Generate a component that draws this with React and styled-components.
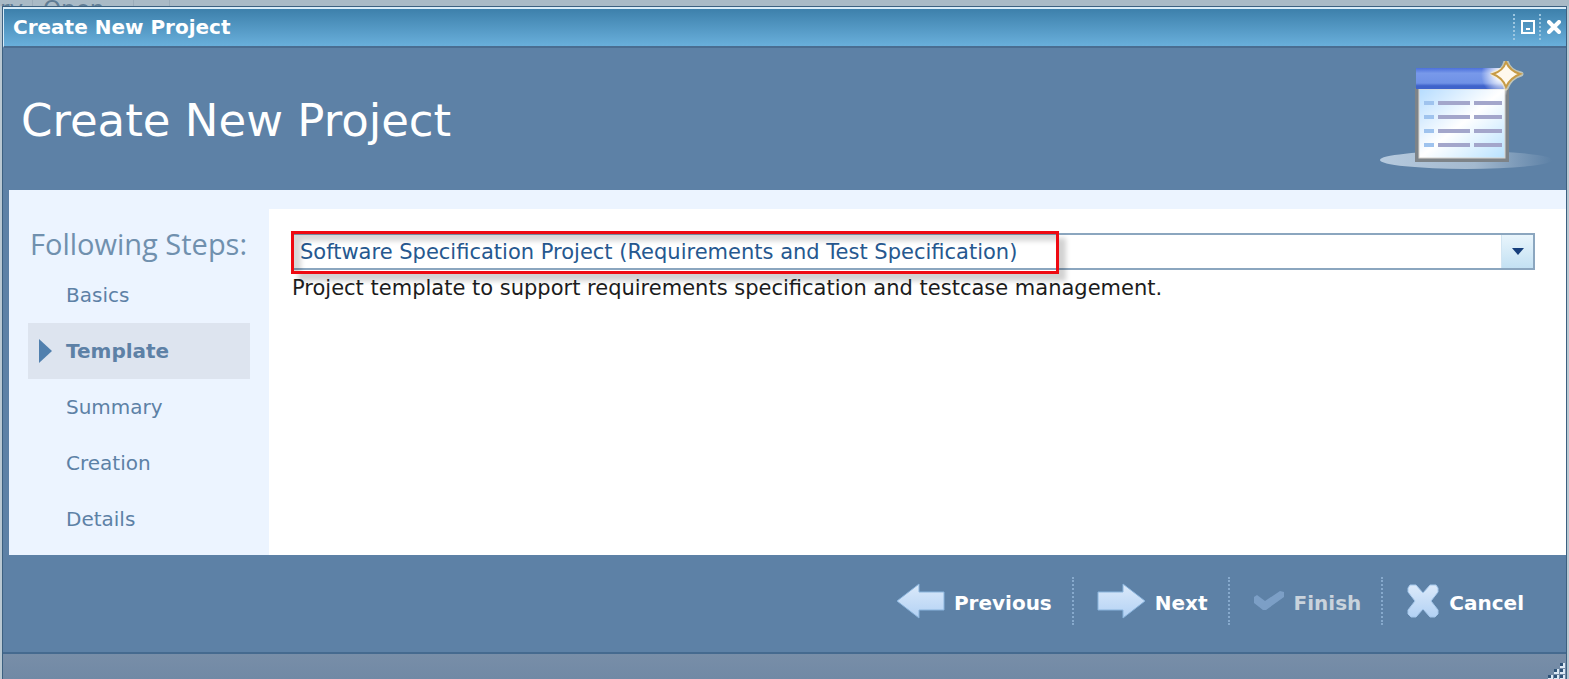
import React from "react";
import styled, { createGlobalStyle, css } from "styled-components";

const Global = createGlobalStyle`
  *, *::before, *::after { box-sizing: border-box; }
  html, body { margin: 0; }
  body {
    background: #b9c8d2;
    font-family: "DejaVu Sans", Verdana, sans-serif;
    font-size: 20px;
    line-height: 24px;
    color: #1c1c1c;
  }
`;

const Page = styled.div`
  min-height: 100vh;
  display: flex;
  flex-direction: column;
  overflow: hidden;
`;

const Backdrop = styled.div`
  height: 6px;
  overflow: hidden;
  display: flex;
  align-items: flex-start;
  background: #a9bac6;
  color: #5f7c94;
  font-size: 23px;
  line-height: 18px;
`;

const BackdropCell = styled.span`
  flex: none;
  width: ${(p) => p.$width}px;
  padding-left: ${(p) => p.$indent || 0}px;
  height: 18px;
  border-right: 1px solid #9aacba;
  white-space: nowrap;
`;

const Dialog = styled.section`
  flex: 1;
  display: flex;
  flex-direction: column;
  margin: 0 2px;
  border: 1px solid #3c6080;
  border-width: 1px 1px 0 1px;
  background: #5d81a6;
`;

const TitleBar = styled.header`
  display: flex;
  align-items: center;
  justify-content: space-between;
  height: 41px;
  padding: 0 1px 1px 9px;
  border-top: 2px solid #d8ecf8;
  border-left: 1px solid #d8ecf8;
  border-bottom: 2px solid #4a6d91;
  background: linear-gradient(#3d80ab, #69afdb);
  color: #fff;
  font-weight: bold;
`;

const TitleTools = styled.div`
  display: flex;
  align-items: center;
`;

const ToolButton = styled.button`
  display: flex;
  align-items: center;
  justify-content: center;
  width: 26px;
  height: 26px;
  padding: 0 0 0 2px;
  border: 0;
  border-left: 2px dotted #9cc6e0;
  background: none;
  color: #fff;
`;

const Banner = styled.div`
  display: flex;
  align-items: center;
  justify-content: space-between;
  height: 142px;
  padding: 0 12px 0 18px;
`;

const Heading = styled.h1`
  margin: 0;
  padding-top: 4px;
  font-size: 45px;
  line-height: 56px;
  font-weight: normal;
  color: #fff;
`;

const Body = styled.div`
  flex: 1;
  display: flex;
  margin-left: 6px;
  padding-top: 19px;
  background: #ecf4ff;
`;

const Sidebar = styled.nav`
  flex: none;
  width: 260px;
  padding: 16px 19px 8px;
`;

const SidebarTitle = styled.h2`
  margin: 0 0 4px 2px;
  font-family: "Open Sans", "Noto Sans", sans-serif;
  font-size: 29px;
  line-height: 38px;
  font-weight: normal;
  color: #7090ae;
  white-space: nowrap;
`;

const Steps = styled.ol`
  margin: 0;
  padding: 0;
  list-style: none;
`;

const Step = styled.li`
  display: flex;
  align-items: center;
  height: 56px;
  padding-left: 11px;
  color: #5d81a6;
  ${(p) =>
    p.$current &&
    css`
      background: #dde4ef;
      font-weight: bold;
    `}
`;

const Marker = styled.span`
  flex: none;
  display: flex;
  width: 27px;
`;

const Content = styled.main`
  flex: 1;
  min-width: 0;
  padding: 24px 31px 24px 23px;
  background: #fff;
  font-size: 21px;
`;

const SelectField = styled.div`
  position: relative;
  display: flex;
  height: 37px;
`;

const TemplateSelect = styled.select`
  appearance: none;
  flex: 1;
  min-width: 0;
  padding: 0 40px 0 6px;
  border: 2px solid #8ba6bf;
  border-radius: 0;
  background: #fff;
  color: #26588f;
  font: inherit;
`;

const SelectArrow = styled.span`
  position: absolute;
  top: 2px;
  right: 2px;
  bottom: 2px;
  width: 32px;
  display: flex;
  align-items: center;
  justify-content: center;
  background: linear-gradient(#e9f5fc, #c3e1f3);
  border-left: 1px solid #d2e5f2;
  pointer-events: none;
`;

const Highlight = styled.span`
  position: absolute;
  top: -2px;
  left: -1px;
  width: 768px;
  max-width: 100%;
  height: 43px;
  border: 3px solid #ee0a12;
  box-shadow: 7px 7px 5px rgba(0, 0, 0, 0.18), inset 7px 7px 5px rgba(0, 0, 0, 0.16);
  pointer-events: none;
`;

const Description = styled.p`
  position: relative;
  margin: 6px 0 0;
`;

const Footer = styled.footer`
  display: flex;
  justify-content: flex-end;
  align-items: center;
  height: 97px;
  padding: 0 22px 6px 0;
`;

const FooterButton = styled.button`
  display: flex;
  align-items: center;
  gap: 9px;
  height: 48px;
  padding: 0 20px 0 23px;
  border: 0;
  border-right: ${(p) => (p.$last ? "0" : "2px dotted #86a9cc")};
  background: none;
  color: #fff;
  font: inherit;
  font-weight: bold;
  &:disabled { color: #c9d3dc; }
`;

const ButtonLabel = styled.span`
  padding-top: 4px;
`;

const StatusBar = styled.div`
  display: flex;
  justify-content: flex-end;
  align-items: flex-end;
  height: 27px;
  border-top: 2px solid #456a8f;
  background: linear-gradient(#788ea8, #7189a5);
`;

const PageIcon = () => (
  <svg width="176" height="116" viewBox="0 6 176 116" aria-hidden="true">
    <defs>
      <linearGradient id="shadow" x1="0" x2="1">
        <stop offset="0" stopColor="#b6cade" />
        <stop offset="0.55" stopColor="#a3b9cf" />
        <stop offset="1" stopColor="#5d81a6" />
      </linearGradient>
      <linearGradient id="sheet" x1="0" y1="0" x2="1" y2="1">
        <stop offset="0" stopColor="#b5dcff" />
        <stop offset="0.5" stopColor="#ffffff" />
        <stop offset="1" stopColor="#b8e2ff" />
      </linearGradient>
      <linearGradient id="bar" x1="0" y1="0" x2="0" y2="1">
        <stop offset="0" stopColor="#4b70db" />
        <stop offset="0.25" stopColor="#7899ea" />
        <stop offset="0.72" stopColor="#6f91e6" />
        <stop offset="0.85" stopColor="#3f63cb" />
      </linearGradient>
      <radialGradient id="glow">
        <stop offset="0.2" stopColor="#fff" />
        <stop offset="1" stopColor="#fff" stopOpacity="0" />
      </radialGradient>
      <clipPath id="barArea">
        <rect x="38" y="13" width="91" height="30" />
      </clipPath>
    </defs>
    <ellipse cx="88" cy="105" rx="86" ry="9" fill="url(#shadow)" />
    <rect x="37" y="33" width="94" height="74" fill="#7d8388" />
    <rect x="41" y="34" width="86" height="69" fill="url(#sheet)" stroke="#d9d5cf" strokeWidth="1" />
    <rect x="38" y="13" width="91" height="21" fill="url(#bar)" />
    <circle cx="124" cy="20" r="21" fill="url(#glow)" clipPath="url(#barArea)" />
    {[48, 62, 76, 90].map((y) => (
      <g key={y} fill="#a3a6cb">
        <rect x="46" y={y - 2} width="10" height="4" fill="#9fc3ee" />
        <rect x="60" y={y - 2} width="32" height="4" />
        <rect x="96" y={y - 2} width="28" height="4" />
      </g>
    ))}
    <path d="M128 6Q131 17 143 19Q132 22 128 33Q126 22 115 19Q126 17 128 6Z" fill="#fffdf3" stroke="#fff1c8" strokeWidth="5" strokeLinejoin="round" opacity=".6" />
    <path d="M128 7Q132 16 142 19Q132 23 128 32Q125 23 115 19Q125 16 128 7Z" fill="#fff9ed" stroke="#c79b45" strokeWidth="2" />
  </svg>
);

const IconDefs = styled.svg`
  position: absolute;
`;

const IconGradient = () => (
  <IconDefs width="0" height="0" aria-hidden="true">
    <linearGradient id="ice" x1="0" y1="0" x2="0" y2="1">
      <stop offset="0" stopColor="#dceafa" />
      <stop offset="1" stopColor="#b2d1f4" />
    </linearGradient>
  </IconDefs>
);

const ArrowIcon = ({ back }) => (
  <svg width="49" height="36" viewBox="0 0 49 36" aria-hidden="true">
    <path
      d={back ? "M1 18L23 1V9H48V27H23V35Z" : "M48 18L26 1V9H1V27H26V35Z"}
      fill="url(#ice)"
      stroke="#8ab4dc"
    />
  </svg>
);

const CheckIcon = () => (
  <svg width="32" height="24" viewBox="0 0 32 24" aria-hidden="true">
    <path d="M1 8L4 6L12 12L27 2L31 3V8L13 21H10L1 14Z" fill="#7c9fc6" />
  </svg>
);

const CrossIcon = () => (
  <svg width="34" height="36" viewBox="0 0 34 36" aria-hidden="true">
    <path
      d="M4 2H10L17 10L24 2H30L32 5V9L25 18L32 27V31L29 34H24L17 26L10 34H5L2 31V27L9 18L2 9V5Z"
      fill="url(#ice)"
      stroke="#a5c7ea"
    />
  </svg>
);

const STEPS = ["Basics", "Template", "Summary", "Creation", "Details"];

export default function App() {
  return (
    <Page>
      <Global />
      <IconGradient />
      <Backdrop aria-hidden="true">
        <BackdropCell $width={33}>ry</BackdropCell>
        <BackdropCell $width={101} $indent={10}>Open</BackdropCell>
        <BackdropCell $width={36} />
      </Backdrop>
      <Dialog aria-label="Create New Project">
        <TitleBar>
          <span>Create New Project</span>
          <TitleTools>
            <ToolButton aria-label="Restore">
              <svg width="14" height="14" viewBox="0 0 14 14">
                <path d="M1 1H13V13H1Z" fill="none" stroke="currentColor" strokeWidth="2" />
                <path d="M5 9H9" stroke="currentColor" strokeWidth="2" />
              </svg>
            </ToolButton>
            <ToolButton aria-label="Close">
              <svg width="14" height="14" viewBox="0 0 14 14">
                <path d="M2 2L12 12M12 2L2 12" stroke="currentColor" strokeWidth="4" strokeLinecap="round" />
              </svg>
            </ToolButton>
          </TitleTools>
        </TitleBar>
        <Banner>
          <Heading>Create New Project</Heading>
          <PageIcon />
        </Banner>
        <Body>
          <Sidebar aria-label="Steps">
            <SidebarTitle>Following Steps:</SidebarTitle>
            <Steps>
              {STEPS.map((name) => {
                const current = name === "Template";
                return (
                  <Step key={name} $current={current} aria-current={current ? "step" : undefined}>
                    <Marker>
                      {current && (
                        <svg width="13" height="24" viewBox="0 0 13 24" aria-hidden="true">
                          <path d="M0 0L13 12L0 24Z" fill="#5180ae" />
                        </svg>
                      )}
                    </Marker>
                    {name}
                  </Step>
                );
              })}
            </Steps>
          </Sidebar>
          <Content>
            <SelectField>
              <TemplateSelect aria-label="Project template">
                <option>Software Specification Project (Requirements and Test Specification)</option>
              </TemplateSelect>
              <SelectArrow>
                <svg width="12" height="7" viewBox="0 0 12 7" aria-hidden="true">
                  <path d="M0 0H12L6 7Z" fill="#173f7c" />
                </svg>
              </SelectArrow>
              <Highlight />
            </SelectField>
            <Description>
              Project template to support requirements specification and testcase management.
            </Description>
          </Content>
        </Body>
        <Footer>
          <FooterButton><ArrowIcon back /><ButtonLabel>Previous</ButtonLabel></FooterButton>
          <FooterButton><ArrowIcon /><ButtonLabel>Next</ButtonLabel></FooterButton>
          <FooterButton disabled><CheckIcon /><ButtonLabel>Finish</ButtonLabel></FooterButton>
          <FooterButton $last><CrossIcon /><ButtonLabel>Cancel</ButtonLabel></FooterButton>
        </Footer>
        <StatusBar>
          <svg width="20" height="18" viewBox="0 0 20 18" aria-hidden="true">
            {[[14, 2], [8, 8], [14, 8], [2, 14], [8, 14], [14, 14]].map(([x, y]) => (
              <g key={`${x}-${y}`}>
                <rect x={x} y={y} width="5" height="5" fill="#dce8f4" />
                <rect x={x} y={y} width="3" height="3" fill="#2f5378" />
              </g>
            ))}
          </svg>
        </StatusBar>
      </Dialog>
    </Page>
  );
}
